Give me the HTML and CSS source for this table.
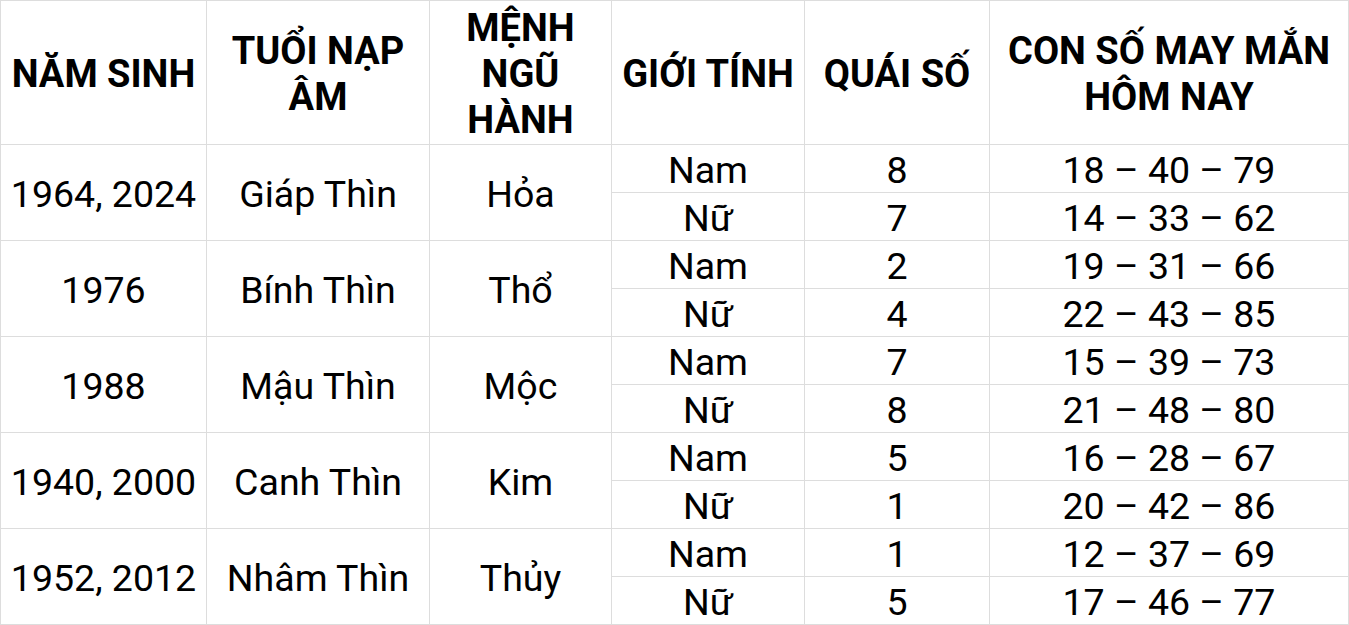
FILE: index.html
```html
<!DOCTYPE html>
<html lang="vi">
<head>
<meta charset="utf-8">
<link rel="stylesheet" href="styles.css">
</head>
<body>
<table class="tbl">
  <colgroup>
    <col class="c1"><col class="c2"><col class="c3"><col class="c4"><col class="c5"><col class="c6">
  </colgroup>
  <thead>
    <tr class="head">
      <th>NĂM SINH</th>
      <th>TUỔI NẠP ÂM</th>
      <th>MỆNH NGŨ HÀNH</th>
      <th>GIỚI TÍNH</th>
      <th>QUÁI SỐ</th>
      <th>CON SỐ MAY MẮN HÔM NAY</th>
    </tr>
  </thead>
  <tbody>
    <tr><td rowspan="2">1964, 2024</td><td rowspan="2">Giáp Thìn</td><td rowspan="2">Hỏa</td><td>Nam</td><td>8</td><td>18 – 40 – 79</td></tr>
    <tr><td>Nữ</td><td>7</td><td>14 – 33 – 62</td></tr>
    <tr><td rowspan="2">1976</td><td rowspan="2">Bính Thìn</td><td rowspan="2">Thổ</td><td>Nam</td><td>2</td><td>19 – 31 – 66</td></tr>
    <tr><td>Nữ</td><td>4</td><td>22 – 43 – 85</td></tr>
    <tr><td rowspan="2">1988</td><td rowspan="2">Mậu Thìn</td><td rowspan="2">Mộc</td><td>Nam</td><td>7</td><td>15 – 39 – 73</td></tr>
    <tr><td>Nữ</td><td>8</td><td>21 – 48 – 80</td></tr>
    <tr><td rowspan="2">1940, 2000</td><td rowspan="2">Canh Thìn</td><td rowspan="2">Kim</td><td>Nam</td><td>5</td><td>16 – 28 – 67</td></tr>
    <tr><td>Nữ</td><td>1</td><td>20 – 42 – 86</td></tr>
    <tr><td rowspan="2">1952, 2012</td><td rowspan="2">Nhâm Thìn</td><td rowspan="2">Thủy</td><td>Nam</td><td>1</td><td>12 – 37 – 69</td></tr>
    <tr><td>Nữ</td><td>5</td><td>17 – 46 – 77</td></tr>
  </tbody>
</table>
</body>
</html>
```
FILE: styles.css
```css
html, body {
  margin: 0;
  padding: 0;
  background: #ffffff;
}
body {
  font-family: Roboto, "Noto Sans", sans-serif;
  color: #000000;
}
.tbl {
  border-collapse: collapse;
  table-layout: fixed;
  width: 1348px;
}
.c1 { width: 206px; }
.c2 { width: 223px; }
.c3 { width: 182px; }
.c4 { width: 193px; }
.c5 { width: 185px; }
.c6 { width: 359px; }
.tbl th, .tbl td {
  border: 1px solid #dddddd;
  text-align: center;
  vertical-align: middle;
  padding: 0 4px;
}
.tbl th {
  font-weight: 700;
  font-size: 38px;
  line-height: 46px;
  height: 141px;
  padding-top: 2px;
}
.tbl td {
  font-weight: 400;
  font-size: 37.5px;
  line-height: 40px;
  height: 45px;
  padding-top: 2px;
}
```
